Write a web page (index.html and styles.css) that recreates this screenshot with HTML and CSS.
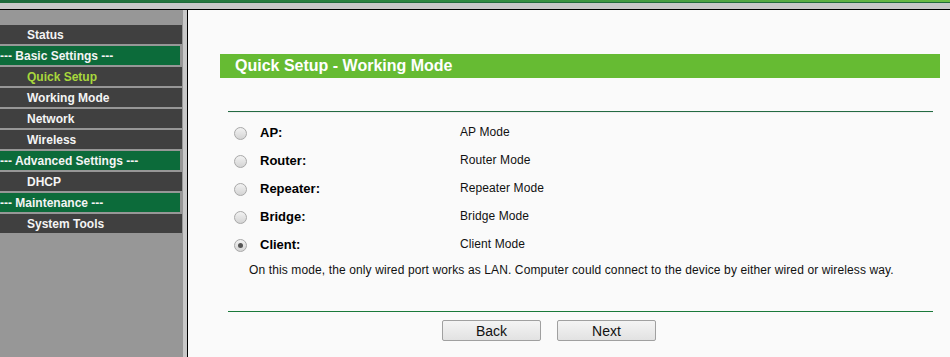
FILE: index.html
```html
<!DOCTYPE html>
<html lang="en">
<head>
    <meta charset="UTF-8">
    <title>Quick Setup - Working Mode</title>
    <link rel="stylesheet" href="styles.css">
</head>
<body>
    <div class="topbar"></div>
    <div class="top-gap"></div>
    <div class="frame">
        <div class="sidebar">
            <div class="menu-item">Status</div>
            <div class="menu-head">--- Basic Settings ---</div>
            <div class="menu-item active">Quick Setup</div>
            <div class="menu-item">Working Mode</div>
            <div class="menu-item">Network</div>
            <div class="menu-item">Wireless</div>
            <div class="menu-head">--- Advanced Settings ---</div>
            <div class="menu-item">DHCP</div>
            <div class="menu-head">--- Maintenance ---</div>
            <div class="menu-item">System Tools</div>
        </div>
        <div class="sep"></div>
        <div class="content">
            <div class="title-bar">Quick Setup - Working Mode</div>
            <div class="panel">
                <div class="line"></div>
                <div class="modes">
                    <label class="mode-row">
                        <span class="radio"></span>
                        <span class="mode-name">AP:</span>
                        <span class="mode-desc">AP Mode</span>
                    </label>
                    <label class="mode-row">
                        <span class="radio"></span>
                        <span class="mode-name">Router:</span>
                        <span class="mode-desc">Router Mode</span>
                    </label>
                    <label class="mode-row">
                        <span class="radio"></span>
                        <span class="mode-name">Repeater:</span>
                        <span class="mode-desc">Repeater Mode</span>
                    </label>
                    <label class="mode-row">
                        <span class="radio"></span>
                        <span class="mode-name">Bridge:</span>
                        <span class="mode-desc">Bridge Mode</span>
                    </label>
                    <label class="mode-row">
                        <span class="radio checked"></span>
                        <span class="mode-name">Client:</span>
                        <span class="mode-desc">Client Mode</span>
                    </label>
                </div>
                <p class="mode-note">On this mode, the only wired port works as LAN. Computer could connect to the device by either wired or wireless way.</p>
                <div class="line bottom"></div>
                <div class="buttons">
                    <button class="btn">Back</button>
                    <button class="btn">Next</button>
                </div>
            </div>
        </div>
    </div>
</body>
</html>
```

FILE: styles.css
```css
body {
    margin: 0;
    font-family: "Liberation Sans", Arial, sans-serif;
    background-color: #c8c8c8;
    height: 357px;
    overflow: hidden;
}
.topbar {
    height: 2px;
    background: linear-gradient(to right, #1d6a3c, #2f8a40 50%, #6cbd45);
    border-bottom: 1px solid #1f6a3a;
}
.top-gap {
    height: 6px;
    background-color: #c8c8c8;
}
.frame {
    display: flex;
    border-top: 1px solid #000;
    height: 347px;
}
.sidebar {
    width: 183px;
    background-color: #979797;
    padding-top: 15px;
}
.menu-item,
.menu-head {
    height: 19px;
    line-height: 21px;
    overflow: hidden;
    margin-bottom: 2px;
    font-size: 12px;
    font-weight: bold;
    color: #f4f4f4;
    white-space: nowrap;
}
.menu-item {
    width: 155px;
    padding-left: 27px;
    background-color: #404040;
}
.menu-item.active {
    color: #a8d83c;
}
.menu-head {
    width: 180px;
    background-color: #0c6b3a;
}
.sep {
    width: 4px;
    background-color: #c8c8c8;
    border-right: 1px solid #000;
}
.content {
    flex: 1;
    background-color: #fafafa;
    padding: 44px 10px 0 32px;
}
.title-bar {
    height: 24px;
    line-height: 24px;
    background-color: #66bb33;
    color: #fff;
    font-size: 16px;
    font-weight: bold;
    padding-left: 15px;
}
.panel {
    margin: 0 7px 0 8px;
}
.line {
    margin-top: 33px;
    height: 1px;
    background-color: #246b43;
    border-bottom: 1px solid #eeeeee;
}
.line.bottom {
    margin-top: 33px;
    background-color: #1a7a3a;
    border-bottom: none;
}
.modes {
    padding-top: 5px;
}
.mode-row {
    display: flex;
    align-items: center;
    height: 28px;
    font-size: 12px;
    color: #111;
}
.radio {
    width: 11px;
    height: 11px;
    margin-left: 6px;
    margin-top: 2px;
    border: 1px solid #a8a8a8;
    border-radius: 50%;
    background: linear-gradient(#f2f2f2, #d4d4d4);
    position: relative;
}
.radio.checked::after {
    content: "";
    position: absolute;
    left: 3px;
    top: 3px;
    width: 5px;
    height: 5px;
    border-radius: 50%;
    background-color: #555;
}
.mode-name {
    width: 200px;
    margin-left: 13px;
    font-size: 13px;
    font-weight: bold;
    color: #000;
}
.mode-desc {
    color: #111;
    letter-spacing: 0.1px;
}
.mode-note {
    margin: 4px 0 0 21px;
    font-size: 12px;
    line-height: 16px;
    letter-spacing: 0.12px;
    color: #111;
}
.buttons {
    display: flex;
    gap: 16px;
    margin-top: 8px;
    padding-left: 214px;
}
.btn {
    width: 99px;
    height: 21px;
    padding: 0;
    font-family: "Liberation Sans", Arial, sans-serif;
    font-size: 14px;
    color: #111;
    border: 1px solid #a0a0a0;
    border-radius: 2px;
    background: linear-gradient(#f4f4f4, #e2e2e2);
}
```
